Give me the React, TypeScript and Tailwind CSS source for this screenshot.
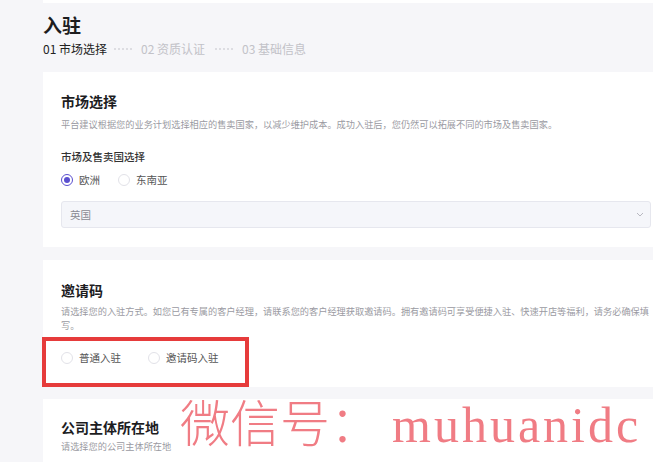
import React from "react";

function Radio({ label, checked = false }: { label: string; checked?: boolean }) {
  return (
    <label className="flex items-center gap-[6px] h-[15px]">
      <span
        className={
          checked
            ? "w-[12px] h-[12px] rounded-full border border-[#5a4fcf] flex items-center justify-center bg-white"
            : "w-[12px] h-[12px] rounded-full border border-[#e2e2e8] bg-white"
        }
      >
        {checked && <span className="w-[6px] h-[6px] rounded-full bg-[#5a4fcf]" />}
      </span>
      <span className="text-[10.5px] leading-[15px] text-[#555]">{label}</span>
    </label>
  );
}

function Dots() {
  return (
    <div className="flex items-center gap-[2px]">
      {[0, 1, 2, 3, 4].map((i) => (
        <span key={i} className="w-[2px] h-[2px] rounded-full bg-[#d4d4da]" />
      ))}
    </div>
  );
}

export default function App() {
  return (
    <div className="relative w-[653px] h-[462px] overflow-hidden bg-[#f6f6f9] font-['Noto_Sans_CJK_SC',sans-serif]">
      <div className="ml-[43px] h-[3px] bg-white" />

      <div className="pl-[43px] pt-[9px]">
        <h1 className="text-[19px] leading-[26px] font-bold text-[#1d1d1f]">入驻</h1>
        <div className="mt-[3px] flex items-center h-[16px] text-[12px] leading-[16px]">
          <span className="text-[#222]">01 市场选择</span>
          <div className="ml-[7px] mr-[9px]">
            <Dots />
          </div>
          <span className="text-[#c2c2c8]">02 资质认证</span>
          <div className="ml-[10px] mr-[9px]">
            <Dots />
          </div>
          <span className="text-[#c2c2c8]">03 基础信息</span>
        </div>
      </div>

      <div className="pl-[43px] mt-[15px] flex flex-col">
        {/* 市场选择 */}
        <section className="w-[626px] bg-white px-[18px] pt-[19px] pb-[19px]">
          <h2 className="text-[14px] leading-[20px] font-bold text-[#1d1d1f]">市场选择</h2>
          <p className="mt-[7px] text-[9.2px] leading-[13px] text-[#9a9aa2]">
            平台建议根据您的业务计划选择相应的售卖国家，以减少维护成本。成功入驻后，您仍然可以拓展不同的市场及售卖国家。
          </p>
          <div className="mt-[18px] text-[10.5px] leading-[15px] font-medium text-[#333]">市场及售卖国选择</div>
          <div className="mt-[8px] flex items-center gap-[18px]">
            <Radio label="欧洲" checked />
            <Radio label="东南亚" />
          </div>
          <div className="mt-[14px] h-[27px] rounded-[3px] border border-[#e6e7ee] bg-[#f5f6fa] flex items-center justify-between pl-[8px] pr-[6px]">
            <span className="text-[10.5px] text-[#8a8a92]">英国</span>
            <svg width="8" height="5" viewBox="0 0 8 5" fill="none">
              <path d="M1 1l3 3 3-3" stroke="#b8b8c0" strokeWidth="1" />
            </svg>
          </div>
        </section>

        {/* 邀请码 */}
        <section className="mt-[13px] w-[626px] bg-white px-[18px] pt-[20px] pb-[22px]">
          <h2 className="text-[14px] leading-[20px] font-bold text-[#1d1d1f]">邀请码</h2>
          <p className="mt-[4px] w-[600px] text-[9.2px] leading-[14px] text-[#9a9aa2]">
            请选择您的入驻方式。如您已有专属的客户经理，请联系您的客户经理获取邀请码。拥有邀请码可享受便捷入驻、快速开店等福利，请务必确保填写。
          </p>
          <div className="mt-[18px] flex items-center gap-[27px]">
            <Radio label="普通入驻" />
            <Radio label="邀请码入驻" />
          </div>
        </section>

        {/* 公司主体所在地 */}
        <section className="mt-[12px] w-[626px] bg-white px-[18px] pt-[18px] pb-[20px]">
          <h2 className="text-[14px] leading-[20px] font-bold text-[#1d1d1f]">公司主体所在地</h2>
          <p className="mt-[3px] text-[9.2px] leading-[13px] text-[#9a9aa2]">请选择您的公司主体所在地</p>
        </section>
      </div>

      {/* 标注框 */}
      <div className="absolute left-[42px] top-[337px] w-[207px] h-[50px] border-[4px] border-[#e63b3b]" />

      {/* 水印 */}
      <div className="absolute left-[180px] top-[390px] flex items-baseline text-[#f07c84] pointer-events-none">
        <span className="text-[50px] leading-[60px] font-light">微信号：</span>
        <span className="ml-[12px] font-['Liberation_Serif',serif] text-[50px] leading-[60px] tracking-[3px]">
          muhuanidc
        </span>
      </div>
    </div>
  );
}
